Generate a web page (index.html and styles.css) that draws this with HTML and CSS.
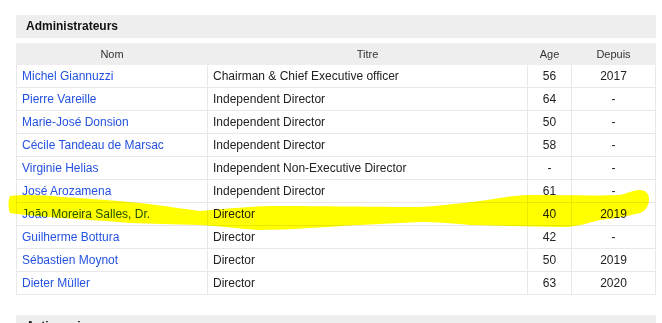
FILE: index.html
```html
<!DOCTYPE html>
<html lang="fr">
<head>
<meta charset="utf-8">
<title>Administrateurs</title>
<link rel="stylesheet" href="styles.css">
</head>
<body>
<div class="page">
  <section class="block">
    <h2 class="block-title">Administrateurs</h2>
    <table class="board">
      <colgroup>
        <col class="c-nom"><col class="c-titre"><col class="c-age"><col class="c-depuis">
      </colgroup>
      <thead>
        <tr><th>Nom</th><th>Titre</th><th>Age</th><th>Depuis</th></tr>
      </thead>
      <tbody>
        <tr><td><a href="#">Michel Giannuzzi</a></td><td>Chairman &amp; Chief Executive officer</td><td class="ctr">56</td><td class="ctr">2017</td></tr>
        <tr><td><a href="#">Pierre Vareille</a></td><td>Independent Director</td><td class="ctr">64</td><td class="ctr">-</td></tr>
        <tr><td><a href="#">Marie-José Donsion</a></td><td>Independent Director</td><td class="ctr">50</td><td class="ctr">-</td></tr>
        <tr><td><a href="#">Cécile Tandeau de Marsac</a></td><td>Independent Director</td><td class="ctr">58</td><td class="ctr">-</td></tr>
        <tr><td><a href="#">Virginie Helias</a></td><td>Independent Non-Executive Director</td><td class="ctr">-</td><td class="ctr">-</td></tr>
        <tr><td><a href="#">José Arozamena</a></td><td>Independent Director</td><td class="ctr">61</td><td class="ctr">-</td></tr>
        <tr><td><a href="#">João Moreira Salles, Dr.</a></td><td>Director</td><td class="ctr">40</td><td class="ctr">2019</td></tr>
        <tr><td><a href="#">Guilherme Bottura</a></td><td>Director</td><td class="ctr">42</td><td class="ctr">-</td></tr>
        <tr><td><a href="#">Sébastien Moynot</a></td><td>Director</td><td class="ctr">50</td><td class="ctr">2019</td></tr>
        <tr><td><a href="#">Dieter Müller</a></td><td>Director</td><td class="ctr">63</td><td class="ctr">2020</td></tr>
      </tbody>
    </table>
  </section>
  <section class="block next">
    <h2 class="block-title">Actionnaires</h2>
  </section>
  <svg class="marker" width="662" height="323" viewBox="0 0 662 323" aria-hidden="true">
    <path d="M10,196 C25,194 45,195 62,197 C95,199 120,201 140,203 C165,206 185,209 200,211 C225,209 250,206 272,206 C320,206 380,207 420,207 C450,205 480,201 500,198 C512,196 522,195 532,195 C560,195 600,196 620,195 C628,193 634,190 640,190 C646,190 649,194 649,199 C649,205 646,211 640,213 C628,216 612,219 600,220 C588,223 576,227 565,227 C530,226 500,226 470,225 C450,223 435,222 420,222 C400,223 380,224 360,225 C320,227 290,230 260,230 C240,229 220,226 200,225 C175,224 150,224 130,223 C105,221 80,219 60,218 C40,216 22,215 10,213 C8,208 8,201 10,196 Z"/>
  </svg>
</div>
</body>
</html>
```

FILE: styles.css
```css
html, body {
  margin: 0;
  padding: 0;
  background: #ffffff;
}

.page {
  position: relative;
  width: 662px;
  height: 323px;
  overflow: hidden;
  box-sizing: border-box;
  padding: 15px 6px 0 16px;
  font-family: "Liberation Sans", Arial, sans-serif;
  color: #222222;
}

.block {
  width: 640px;
}

.block-title {
  margin: 0;
  height: 23px;
  line-height: 23px;
  padding: 0 10px;
  background: #eeeeee;
  font-size: 12px;
  font-weight: bold;
  color: #111111;
}

.next {
  margin-top: 20px;
}

.board {
  margin-top: 5px;
  width: 639px;
  table-layout: fixed;
  border-collapse: collapse;
  font-size: 12px;
}

.c-nom { width: 191px; }
.c-titre { width: 320px; }
.c-age { width: 44px; }
.c-depuis { width: 84px; }

.board th {
  height: 20px;
  padding: 0;
  background: #eeeeee;
  font-size: 11px;
  font-weight: normal;
  color: #333333;
  text-align: center;
  border: 1px solid #eeeeee;
}

.board td {
  height: 22px;
  padding: 0 5px;
  border: 1px solid #e8e8e8;
  color: #222222;
  white-space: nowrap;
  overflow: hidden;
}

.board td.ctr {
  text-align: center;
  padding: 0;
}

.board a {
  color: #2452e0;
  text-decoration: none;
}

.marker {
  position: absolute;
  left: 0;
  top: 0;
  pointer-events: none;
  mix-blend-mode: multiply;
}

.marker path {
  fill: #ffff00;
}
```
